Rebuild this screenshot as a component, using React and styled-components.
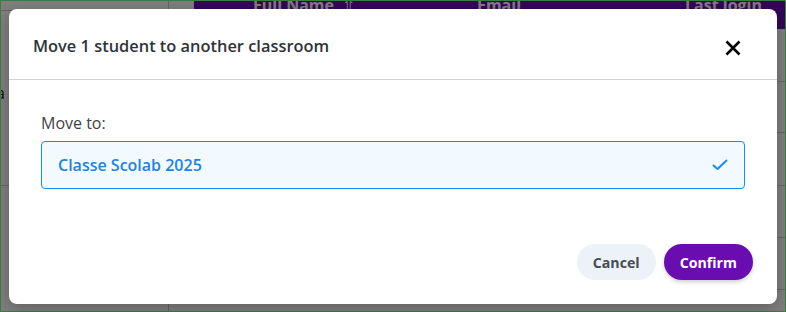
import React from "react";
import styled, { createGlobalStyle } from "styled-components";

const Global = createGlobalStyle`
  html, body { margin: 0; padding: 0; }
  body {
    width: 786px; height: 312px; overflow: hidden;
    font-family: "Open Sans", "Noto Sans", sans-serif;
    background: #fff;
  }
  * { box-sizing: border-box; }
`;

const Page = styled.div`
  position: relative;
  width: 786px;
  height: 312px;
  display: flex;
  background: #fff;
  overflow: hidden;
`;

const Sidebar = styled.div`
  width: 169px;
  flex: none;
  border-right: 1px solid #c8c8c8;
  display: flex;
  flex-direction: column;
  padding-top: 10px;
`;

const SideRow = styled.div`
  height: ${(p) => p.$h}px;
  border-top: 1px solid #c8c8c8;
  font-size: 16px;
  color: #222;
  padding: 0 0 10px 2px;
  display: flex;
  align-items: center;
  margin-left: -6px;
`;

const Main = styled.div`
  flex: 1;
  padding-left: 25px;
  display: flex;
  flex-direction: column;
  min-width: 0;
`;

const TableHead = styled.div`
  height: 35px;
  flex: none;
  background: #660fac;
  display: grid;
  grid-template-columns: 220px 170px 178px;
  align-items: start;
  color: #fff;
  font-weight: 700;
  font-size: 16px;
  margin-top: -6px;
`;

const HeadCell = styled.div`
  text-align: ${(p) => p.$align || "center"};
  line-height: 22px;
  white-space: nowrap;
`;

const SortArrow = styled.span`
  margin-left: 8px;
  font-weight: 400;
`;

const TableRow = styled.div`
  height: ${(p) => p.$h || 52}px;
  flex: none;
  border-bottom: 1px solid #c6c6c6;
`;

const Overlay = styled.div`
  position: absolute;
  inset: 0;
  background: rgba(0, 0, 0, 0.5);
  border: 1px solid #3f7a45;
  padding: 8px 8px 7px 8px;
  display: flex;
  align-items: flex-start;
  justify-content: center;
`;

const Modal = styled.div`
  width: 768px;
  height: 295px;
  background: #fff;
  border-radius: 8px;
  box-shadow: 0 4px 16px rgba(0, 0, 0, 0.25);
  display: flex;
  flex-direction: column;
`;

const Header = styled.div`
  height: 71px;
  flex: none;
  display: flex;
  align-items: center;
  justify-content: space-between;
  padding: 2px 32px 0 24px;
  border-bottom: 1px solid #cbd3dc;
`;

const Title = styled.h2`
  margin: 0;
  font-size: 16.4px;
  font-weight: 600;
  color: #2f3338;
`;

const CloseButton = styled.button`
  border: none;
  background: none;
  padding: 0;
  width: 24px;
  height: 24px;
  display: flex;
  align-items: center;
  justify-content: center;
  cursor: pointer;
  margin-top: 6px;
`;

const Body = styled.div`
  flex: 1;
  padding: 32px 32px 0 32px;
  display: flex;
  flex-direction: column;
`;

const Label = styled.label`
  font-size: 16px;
  color: #3f4348;
  line-height: 22px;
  margin-bottom: 7px;
`;

const Select = styled.div`
  height: 48px;
  border: 1px solid #1b8ce9;
  border-radius: 4px;
  background: #f2faff;
  display: flex;
  align-items: center;
  justify-content: space-between;
  padding: 0 16px;
`;

const SelectText = styled.span`
  font-size: 16px;
  font-weight: 600;
  color: #1b84e4;
`;

const Footer = styled.div`
  display: flex;
  justify-content: flex-end;
  gap: 8px;
  padding: 0 24px 24px 24px;
`;

const Button = styled.button`
  height: 36px;
  border: none;
  border-radius: 18px;
  padding: 0 16px;
  font-family: inherit;
  font-size: 14.2px;
  font-weight: 700;
  cursor: pointer;
  background: ${(p) => (p.$primary ? "#6a0db0" : "#edf2f8")};
  color: ${(p) => (p.$primary ? "#fff" : "#454c55")};
  box-shadow: ${(p) => (p.$primary ? "0 2px 4px rgba(0,0,0,0.2)" : "none")};
`;

export default function App() {
  return (
    <>
      <Global />
      <Page>
        <Sidebar>
          <SideRow $h={178}>a</SideRow>
          <SideRow $h={130} />
        </Sidebar>
        <Main>
          <TableHead>
            <HeadCell>
              Full Name<SortArrow>⇧</SortArrow>
            </HeadCell>
            <HeadCell>Email</HeadCell>
            <HeadCell $align="right">Last login</HeadCell>
          </TableHead>
          <TableRow $h={53} />
          <TableRow $h={51} />
          <TableRow $h={53} />
          <TableRow />
          <TableRow />
        </Main>
        <Overlay>
          <Modal role="dialog">
            <Header>
              <Title>Move 1 student to another classroom</Title>
              <CloseButton aria-label="Close">
                <svg width="16" height="16" viewBox="0 0 16 16">
                  <path d="M1.5 1.5 L14.5 14.5 M14.5 1.5 L1.5 14.5" stroke="#000" strokeWidth="2.6" />
                </svg>
              </CloseButton>
            </Header>
            <Body>
              <Label>Move to:</Label>
              <Select>
                <SelectText>Classe Scolab 2025</SelectText>
                <svg width="16" height="12" viewBox="0 0 16 12">
                  <path d="M1.5 6.5 L5.5 10 L14.5 1.5" fill="none" stroke="#1b8ce9" strokeWidth="2" strokeLinecap="round" strokeLinejoin="round" />
                </svg>
              </Select>
            </Body>
            <Footer>
              <Button>Cancel</Button>
              <Button $primary>Confirm</Button>
            </Footer>
          </Modal>
        </Overlay>
      </Page>
    </>
  );
}
